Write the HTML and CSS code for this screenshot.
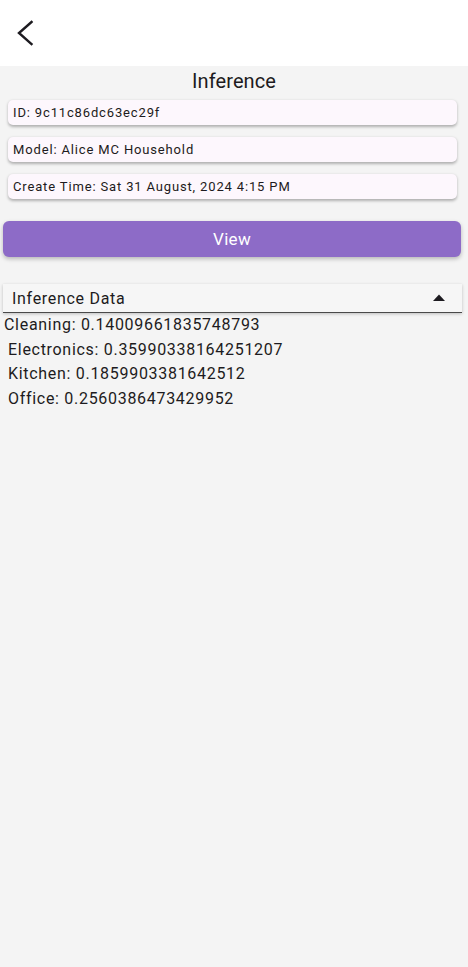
FILE: index.html
```html
<!DOCTYPE html>
<html>
<head>
<meta charset="utf-8">
<link rel="stylesheet" href="styles.css">
</head>
<body>
<header class="appbar">
  <svg class="back" width="24" height="28" viewBox="0 0 24 28"><polyline points="19.5,3 7,14 19.5,25" fill="none" stroke="#1d1b20" stroke-width="2.4" stroke-linecap="square" stroke-linejoin="miter"/></svg>
</header>
<main class="content">
  <h1 class="title">Inference</h1>
  <div class="cards">
    <div class="card">ID: 9c11c86dc63ec29f</div>
    <div class="card">Model: Alice MC Household</div>
    <div class="card">Create Time: Sat 31 August, 2024 4:15 PM</div>
  </div>
  <button class="view">View</button>
  <div class="panel">
    <div class="panel-head">
      <span>Inference Data</span>
      <svg class="caret" width="12" height="7" viewBox="0 0 12 7"><polygon points="0,7 6,0.5 12,7" fill="#1d1b20"/></svg>
    </div>
    <div class="rows">
      <div class="row first">Cleaning: 0.14009661835748793</div>
      <div class="row">Electronics: 0.35990338164251207</div>
      <div class="row">Kitchen: 0.1859903381642512</div>
      <div class="row">Office: 0.2560386473429952</div>
    </div>
  </div>
</main>
</body>
</html>
```
FILE: styles.css
```css
* { box-sizing: border-box; }
html, body { margin: 0; padding: 0; }
body {
  width: 468px;
  height: 967px;
  background: #f4f4f4;
  font-family: Roboto, "Noto Sans", sans-serif;
  color: #1d1b20;
  overflow: hidden;
}
.appbar {
  height: 66px;
  background: #ffffff;
  display: flex;
  align-items: center;
  padding-left: 12px;
}
.back { display: block; }
.content { display: flex; flex-direction: column; }
.title {
  margin: 2px 0 0;
  font-size: 20px;
  font-weight: 400;
  line-height: 26px;
  text-align: center;
  letter-spacing: 0.1px;
}
.cards {
  display: flex;
  flex-direction: column;
  gap: 12px;
  padding: 6px 11px 0 8px;
}
.card {
  height: 25px;
  background: #fdf7fd;
  border-radius: 5px;
  box-shadow: 0 1.5px 3px rgba(0,0,0,0.28);
  font-size: 13px;
  line-height: 25px;
  padding-left: 5px;
  letter-spacing: 0.85px;
}
.view {
  margin: 22px 7px 0 3px;
  height: 36px;
  border: none;
  border-radius: 6px;
  background: #8d6bc7;
  color: #ffffff;
  font-family: Roboto, sans-serif;
  font-size: 17px;
  letter-spacing: 0.3px;
  box-shadow: 0 2px 4px rgba(0,0,0,0.25);
  padding: 0;
}
.panel { margin-top: 27px; }
.panel-head {
  margin: 0 6px 0 3px;
  height: 29px;
  background: #f6f6f6;
  border-bottom: 1.5px solid #4a4a4a;
  box-shadow: 0 1px 3px rgba(0,0,0,0.22);
  display: flex;
  align-items: center;
  justify-content: space-between;
  padding: 0 17px 0 9px;
  font-size: 16px;
  letter-spacing: 0.7px;
}
.caret { display: block; margin-top: -2px; }
.rows { padding: 0 0 0 4px; }
.row {
  font-size: 16px;
  line-height: 24.7px;
  padding-left: 4px;
  letter-spacing: 0.7px;
}
.row.first { padding-left: 0; }
```
